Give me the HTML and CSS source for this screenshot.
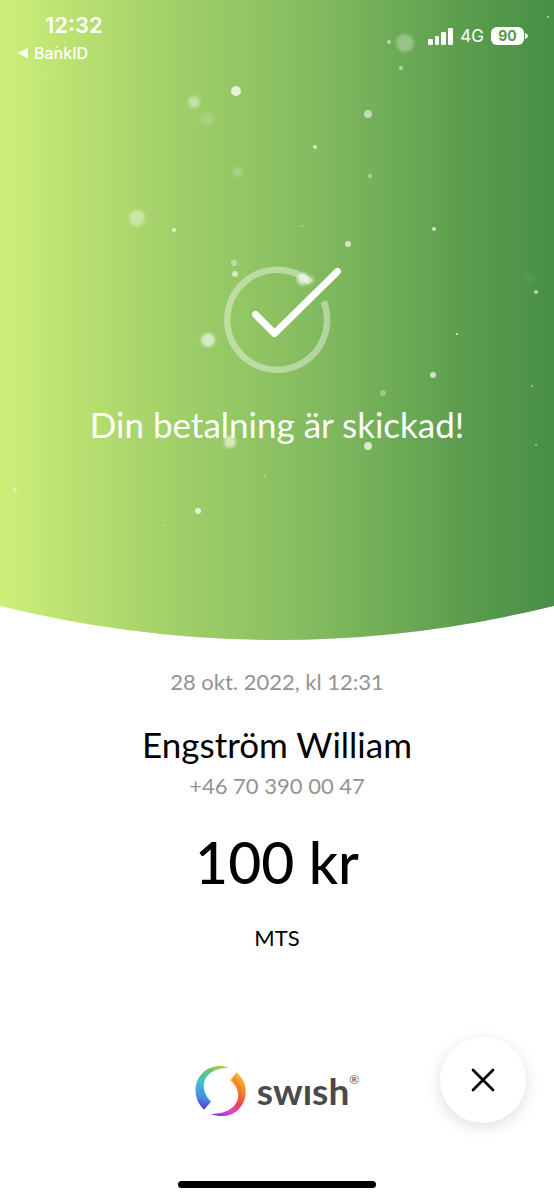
FILE: index.html
```html
<!DOCTYPE html>
<html lang="sv">
<head>
<meta charset="utf-8">
<meta name="viewport" content="width=device-width, initial-scale=1">
<title>Swish – betalning skickad</title>
<link rel="stylesheet" href="styles.css">
</head>
<body>
<header class="hero">
  <svg class="particles" viewBox="0 0 554 640" preserveAspectRatio="xMidYMin slice" aria-hidden="true">
    <defs>
      <filter id="soft" x="-50%" y="-50%" width="200%" height="200%"><feGaussianBlur stdDeviation="1.4"/></filter>
      <filter id="crisp" x="-50%" y="-50%" width="200%" height="200%"><feGaussianBlur stdDeviation="0.6"/></filter>
    </defs>
    <g fill="#fff" filter="url(#soft)">
      <circle cx="405" cy="43" r="9" opacity=".3"/>
      <circle cx="194" cy="102" r="6" opacity=".4"/>
      <circle cx="207" cy="119" r="7" opacity=".15"/>
      <circle cx="137" cy="218" r="8" opacity=".4"/>
      <circle cx="238" cy="172" r="5" opacity=".22"/>
      <circle cx="208" cy="340" r="7" opacity=".6"/>
      <circle cx="230" cy="442" r="6" opacity=".6"/>
      <circle cx="303" cy="279" r="6" opacity=".7"/>
      <circle cx="310" cy="280" r="4" opacity=".4"/>
      <circle cx="48" cy="76" r="8" opacity=".05"/>
      <circle cx="530" cy="278" r="5" opacity=".06"/>
    </g>
    <g fill="#fff" filter="url(#crisp)">
      <circle cx="236" cy="91" r="5" opacity=".75"/>
      <circle cx="368" cy="114" r="4" opacity=".55"/>
      <circle cx="315" cy="147" r="2" opacity=".7"/>
      <circle cx="370" cy="176" r="2" opacity=".45"/>
      <circle cx="174" cy="230" r="2" opacity=".7"/>
      <circle cx="434" cy="229" r="2" opacity=".7"/>
      <circle cx="348" cy="244" r="3" opacity=".65"/>
      <circle cx="234" cy="263" r="3" opacity=".4"/>
      <circle cx="235" cy="274" r="3" opacity=".6"/>
      <circle cx="389" cy="42" r="2" opacity=".5"/>
      <circle cx="401" cy="68" r="2" opacity=".5"/>
      <circle cx="57" cy="47" r="1" opacity=".7"/>
      <circle cx="548" cy="17" r="1" opacity=".6"/>
      <circle cx="536" cy="292" r="2" opacity=".6"/>
      <circle cx="457" cy="334" r="1" opacity=".8"/>
      <circle cx="433" cy="375" r="3" opacity=".7"/>
      <circle cx="383" cy="393" r="3" opacity=".3"/>
      <circle cx="532" cy="386" r="1" opacity=".5"/>
      <circle cx="536" cy="445" r="1" opacity=".5"/>
      <circle cx="368" cy="446" r="4" opacity=".7"/>
      <circle cx="198" cy="511" r="3" opacity=".75"/>
      <circle cx="15" cy="490" r="2" opacity=".4"/>
      <circle cx="265" cy="476" r="1" opacity=".4"/>
      <circle cx="165" cy="525" r="1" opacity=".4"/>
      <circle cx="302" cy="226" r="1" opacity=".4"/>
    </g>
  </svg>

  <div class="status">
    <div class="status-left">
      <time class="clock">12:32</time>
      <a class="back" href="#"><svg width="10" height="10" viewBox="0 0 10 10" aria-hidden="true"><path d="M0.5 5 9.5 .5v9z" fill="#fff" stroke="#fff" stroke-width=".8" stroke-linejoin="round"/></svg>BankID</a>
    </div>
    <div class="status-right">
      <svg width="25" height="17" viewBox="0 0 25 17" fill="#fff" role="img" aria-label="Signalstyrka"><rect y="11" width="5" height="6" rx="1.3"/><rect x="7" y="8" width="4" height="9" rx="1.3"/><rect x="13" y="4" width="5" height="13" rx="1.3"/><rect x="20" width="5" height="17" rx="1.3"/></svg>
      <span class="network">4G</span>
      <span class="battery"><span class="level">90</span><svg width="3" height="6" viewBox="0 0 3 6" aria-hidden="true"><path d="M0 0q3 1 3 3t-3 3z" fill="#fff"/></svg></span>
    </div>
  </div>

  <div class="message">
    <svg class="check" width="120" height="108" viewBox="222 266 120 108" fill="none" aria-hidden="true">
      <path d="M310.500 282.500A50 50 0 1 0 323.700 301.500" stroke="#fff" stroke-opacity=".4" stroke-width="6.500"/>
      <path d="M255.500 314.500 274.500 333.500 337.500 271.500" stroke="#fff" stroke-width="7" stroke-linecap="round" stroke-linejoin="round"/>
    </svg>
    <h1 class="title">Din betalning är skickad!</h1>
  </div>

  <svg class="curve" viewBox="0 0 554 34" preserveAspectRatio="none" aria-hidden="true"><path d="M0 0Q277 68 554 0V35H0z" fill="#fff"/></svg>
</header>

<main class="receipt">
  <time class="date">28 okt. 2022, kl 12:31</time>
  <h2 class="name">Engström William</h2>
  <p class="phone">+46 70 390 00 47</p>
  <p class="amount">100 kr</p>
  <p class="note">MTS</p>
</main>

<footer class="footer">
  <div class="brand">
    <svg width="52" height="52" viewBox="45 50 156 156" aria-hidden="true">
      <defs>
        <linearGradient id="cool" x1="130" y1="52" x2="68" y2="184" gradientUnits="userSpaceOnUse"><stop stop-color="#b5cf45"/><stop offset=".22" stop-color="#62c768"/><stop offset=".5" stop-color="#45bfd0"/><stop offset=".75" stop-color="#479ae8"/><stop offset="1" stop-color="#5a2bd9"/></linearGradient>
        <linearGradient id="warm" x1="168" y1="72" x2="110" y2="204" gradientUnits="userSpaceOnUse"><stop stop-color="#fbb62c"/><stop offset=".3" stop-color="#f58b27"/><stop offset=".58" stop-color="#ee4650"/><stop offset=".8" stop-color="#dc42d6"/><stop offset="1" stop-color="#8831d9"/></linearGradient>
      </defs>
      <path d="M148 58C120 48 89 53 67 75C38 105 40 152 72 184L93 160C53 122 66 58 148 58z" fill="url(#cool)"/>
      <path d="M58 88C53 118 60 151 83 172L93 160C72 138 65 112 75 89C62 108 65 132 76 155C64 137 58 111 58 88z" fill="#3157dc" opacity=".15"/>
      <path d="M170 72C206 104 205 154 175 184C153 205 121 208 92 197C174 198 197 137 151 96z" fill="url(#warm)"/>
      <path d="M161 84C189 112 193 147 172 175C184 145 179 116 158 91z" fill="#dd332b" opacity=".2"/>
    </svg>
    <span class="wordmark">swısh<sup class="mark">®</sup></span>
  </div>
  <button class="close" type="button" aria-label="Stäng"><svg width="24" height="24" viewBox="0 0 24 24" fill="none" stroke="#000" stroke-width="2.700" stroke-linecap="round" aria-hidden="true"><path d="M2 2 22 22M22 2 2 22"/></svg></button>
</footer>
<div class="home-indicator"></div>
</body>
</html>
```
FILE: styles.css
```css
* { box-sizing: border-box; }

body {
  margin: 0;
  min-height: 100vh;
  display: flex;
  flex-direction: column;
  background: #fff;
  color: #000;
  font-family: Lato, "Open Sans", sans-serif;
}

h1, h2, p { margin: 0; font-weight: 400; }
svg { display: block; }

.hero {
  position: relative;
  display: flex;
  flex-direction: column;
  background: linear-gradient(90deg, #cdef78 0%, #b8df70 15%, #a0cf69 32%, #8cc162 50%, #70ad58 70%, #599c4d 85%, #488f46 100%);
  color: #fff;
}

.particles {
  position: absolute;
  inset: 0;
  width: 100%;
  height: 100%;
  pointer-events: none;
}

.status {
  display: flex;
  justify-content: space-between;
  align-items: flex-start;
  padding: 12px 26px 0 18px;
  font-family: Inter, sans-serif;
}

.status-left { display: flex; flex-direction: column; }
.clock { padding-left: 27px; font-size: 22px; line-height: 27px; font-weight: 600; }

.back {
  display: flex;
  align-items: center;
  gap: 6px;
  color: #fff;
  font-size: 16px;
  line-height: 28px;
  font-weight: 500;
  text-decoration: none;
}

.status-right { display: flex; align-items: center; gap: 7px; padding-top: 12px; }
.network { font-size: 17px; line-height: 24px; }
.battery { display: flex; align-items: center; gap: 1px; }

.level {
  width: 33px;
  border-radius: 6px;
  background: #fff;
  color: #569a4c;
  font-size: 14px;
  line-height: 18px;
  font-weight: 700;
  text-align: center;
}

.message {
  display: flex;
  flex-direction: column;
  align-items: center;
  gap: 28px;
  padding: 199px 24px 160px;
}

.check { margin-left: 10px; }
.title { font-size: 35px; line-height: 44px; text-align: center; }
.curve { width: 100%; height: 34px; }

.receipt {
  display: flex;
  flex-direction: column;
  align-items: center;
  flex: 1;
  padding: 28px 24px 0;
  text-align: center;
}

.date, .phone { color: #939393; font-size: 22px; line-height: 28px; }
.name { margin-top: 26px; font-size: 35px; line-height: 44px; }
.phone { margin-top: 6px; }
.amount { margin-top: 28px; font-size: 57px; line-height: 68px; font-weight: 500; }
.note { margin-top: 28px; font-size: 22px; line-height: 28px; }

.footer {
  display: grid;
  grid-template-columns: 1fr auto 1fr;
  align-items: start;
  padding: 0 28px 58px;
}

.brand { grid-column: 2; display: flex; align-items: center; gap: 10px; padding-top: 28px; }

.wordmark {
  display: flex;
  color: #4a4a4c;
  font-size: 37px;
  line-height: 48px;
  font-weight: 700;
}

.mark { font-size: 12px; line-height: 26px; font-weight: 400; }

.close {
  display: grid;
  place-items: center;
  justify-self: end;
  width: 86px;
  height: 86px;
  padding: 0;
  border: 0;
  border-radius: 50%;
  background: #fff;
  box-shadow: 0 4px 16px rgba(0, 0, 0, .13);
}

.home-indicator {
  align-self: center;
  width: 198px;
  height: 7px;
  margin-bottom: 12px;
  border-radius: 4px;
  background: #000;
}
```
